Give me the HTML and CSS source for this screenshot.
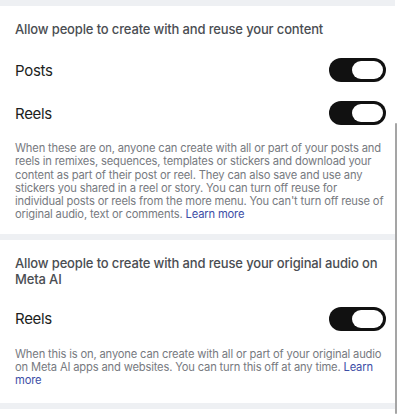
FILE: index.html
```html
<!DOCTYPE html>
<html lang="en">
<head>
  <meta charset="UTF-8">
  <meta name="viewport" content="width=device-width, initial-scale=1">
  <title>Sharing and reuse</title>
  <link rel="stylesheet" href="styles.css">
</head>
<body>
  <div class="band"></div>

  <!-- Reuse of posts and reels -->
  <section class="group">
    <h2>Allow people to create with and reuse your content</h2>
    <div class="row">
      <span>Posts</span>
      <button class="toggle on" aria-pressed="true"><span class="knob"></span></button>
    </div>
    <div class="row">
      <span>Reels</span>
      <button class="toggle on" aria-pressed="true"><span class="knob"></span></button>
    </div>
    <p class="note">When these are on, anyone can create with all or part of your posts and reels in remixes, sequences, templates or stickers and download your content as part of their post or reel. They can also save and use any stickers you shared in a reel or story. You can turn off reuse for individual posts or reels from the more menu. You can't turn off reuse of original audio, text or comments. <a href="#">Learn more</a></p>
  </section>

  <div class="band"></div>

  <!-- Original audio on Meta AI -->
  <section class="group second">
    <h2>Allow people to create with and reuse your original audio on Meta AI</h2>
    <div class="row">
      <span>Reels</span>
      <button class="toggle on" aria-pressed="true"><span class="knob"></span></button>
    </div>
    <p class="note">When this is on, anyone can create with all or part of your original audio on Meta AI apps and websites. You can turn this off at any time. <a href="#">Learn more</a></p>
  </section>

  <div class="band"></div>

  <div class="scrollbar"></div>
</body>
</html>
```

FILE: styles.css
```css
* {
  margin: 0;
  padding: 0;
  box-sizing: border-box;
}
body {
  font-family: Inter, "Noto Sans", sans-serif;
  background: #fff;
  color: #1c1e21;
  width: 400px;
  height: 414px;
  overflow: hidden;
  position: relative;
}
a {
  color: #3d4ea6;
  text-decoration: none;
}

/* grey separators between groups */
.band {
  height: 6px;
  background: #eef0f3;
  margin-right: 5px;
}

.group {
  padding: 15px 14px 12px 15px;
}
.group.second {
  padding-bottom: 15px;
}
.group h2 {
  font-size: 13px;
  font-weight: 500;
  letter-spacing: -0.15px;
  line-height: 16px;
  color: #4a4d52;
  margin-bottom: 11.5px;
}
.second h2 {
  margin-bottom: 10.5px;
}

.row {
  height: 43px;
  display: flex;
  align-items: center;
  justify-content: space-between;
  font-size: 15px;
  letter-spacing: -0.3px;
}

/* switch */
.toggle {
  width: 57px;
  height: 24px;
  border: none;
  border-radius: 12px;
  background: #111;
  padding: 3px;
  display: flex;
  justify-content: flex-start;
}
.toggle.on {
  justify-content: flex-end;
}
.knob {
  width: 31px;
  height: 18px;
  border-radius: 9px;
  background: #fff;
}

.note {
  margin-top: 7.5px;
  font-size: 11.2px;
  letter-spacing: -0.17px;
  line-height: 13.3px;
  color: #777a7f;
}

.scrollbar {
  position: absolute;
  left: 395px;
  top: 123px;
  width: 2px;
  height: 291px;
  border-radius: 1px;
  background: #a5a5a5;
}
```
